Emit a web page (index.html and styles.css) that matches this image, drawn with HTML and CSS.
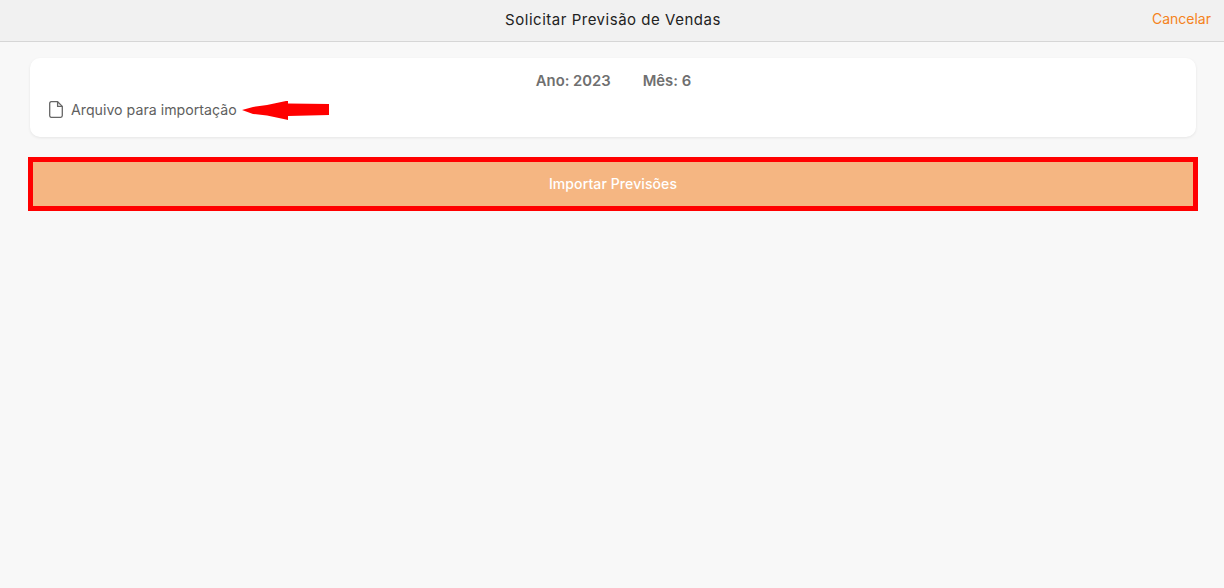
FILE: index.html
```html
<!DOCTYPE html>
<html lang="pt-BR">
<head>
  <meta charset="UTF-8" />
  <title>Solicitar Previsão de Vendas</title>
  <link rel="stylesheet" href="styles.css">
</head>
<body>

  <header class="top-bar">
    <h1 class="top-title">Solicitar Previsão de Vendas</h1>
    <a class="cancel-link" href="#">Cancelar</a>
  </header>

  <main class="content">
    <section class="info-card">
      <div class="period-row">
        <span>Ano: 2023</span>
        <span>Mês: 6</span>
      </div>
      <div class="file-row">
        <svg class="file-icon" viewBox="0 0 14 17" width="14" height="17" aria-hidden="true">
          <path d="M2.2 0.7H8.6L13.3 5.4V14.6C13.3 15.5 12.6 16.3 11.7 16.3H2.2C1.3 16.3 0.7 15.5 0.7 14.6V2.4C0.7 1.5 1.3 0.7 2.2 0.7Z" />
          <path d="M8.6 0.7V5.4H13.3" />
        </svg>
        <span class="file-label">Arquivo para importação</span>
        <!-- red annotation arrow -->
        <svg class="arrow-mark" viewBox="0 0 88 20" width="88" height="20" aria-hidden="true">
          <path d="M0 10L11 7L25 5L44 1H46V3.5L87 4V15L46 16V20L44 19.5L25 15.5L11 14Z" />
        </svg>
      </div>
    </section>

    <button type="button" class="import-btn">Importar Previsões</button>
  </main>

</body>
</html>
```

FILE: styles.css
```css
* {
  box-sizing: border-box;
}
body {
  margin: 0;
  height: 100vh;
  font-family: Inter, "Noto Sans", sans-serif;
  background-color: #f8f8f8;
}
.top-bar {
  height: 42px;
  display: flex;
  align-items: center;
  justify-content: center;
  position: relative;
  background-color: #f1f1f1;
  border-bottom: 1px solid #d6d6d6;
}
.top-title {
  margin: 0 0 2px 2px;
  font-size: 15px;
  font-weight: 400;
  letter-spacing: 0.52px;
  color: #222;
}
.cancel-link {
  position: absolute;
  right: 13px;
  top: 10px;
  font-size: 14px;
  color: #f58220;
  text-decoration: none;
}
.content {
  padding: 16px 26px 0 28px;
}
.info-card {
  height: 79px;
  margin: 0 2px;
  padding-top: 14px;
  background-color: #fff;
  border-radius: 10px;
  box-shadow: 0 1px 3px rgba(0, 0, 0, 0.08);
}
.period-row {
  display: flex;
  justify-content: center;
  gap: 32px;
  padding-left: 1px;
  font-size: 14.8px;
  font-weight: 600;
  line-height: 18px;
  color: #6f6f6f;
}
.file-row {
  display: flex;
  align-items: center;
  position: relative;
  height: 20px;
  margin-top: 9px;
  padding-left: 19px;
}
.file-icon {
  fill: none;
  stroke: #666;
  stroke-width: 1.3;
  stroke-linejoin: round;
}
.file-label {
  margin-left: 8px;
  font-size: 14.2px;
  color: #5f5f5f;
}
.arrow-mark {
  position: absolute;
  left: 212px;
  top: 1px;
  fill: #f00;
}
.import-btn {
  display: block;
  width: 100%;
  height: 54px;
  margin-top: 20px;
  padding-bottom: 3px;
  font-family: inherit;
  font-size: 14px;
  font-weight: 500;
  letter-spacing: 0.1px;
  color: #fff;
  background-color: #f5b682;
  border: 5px solid #f00;
}
```
